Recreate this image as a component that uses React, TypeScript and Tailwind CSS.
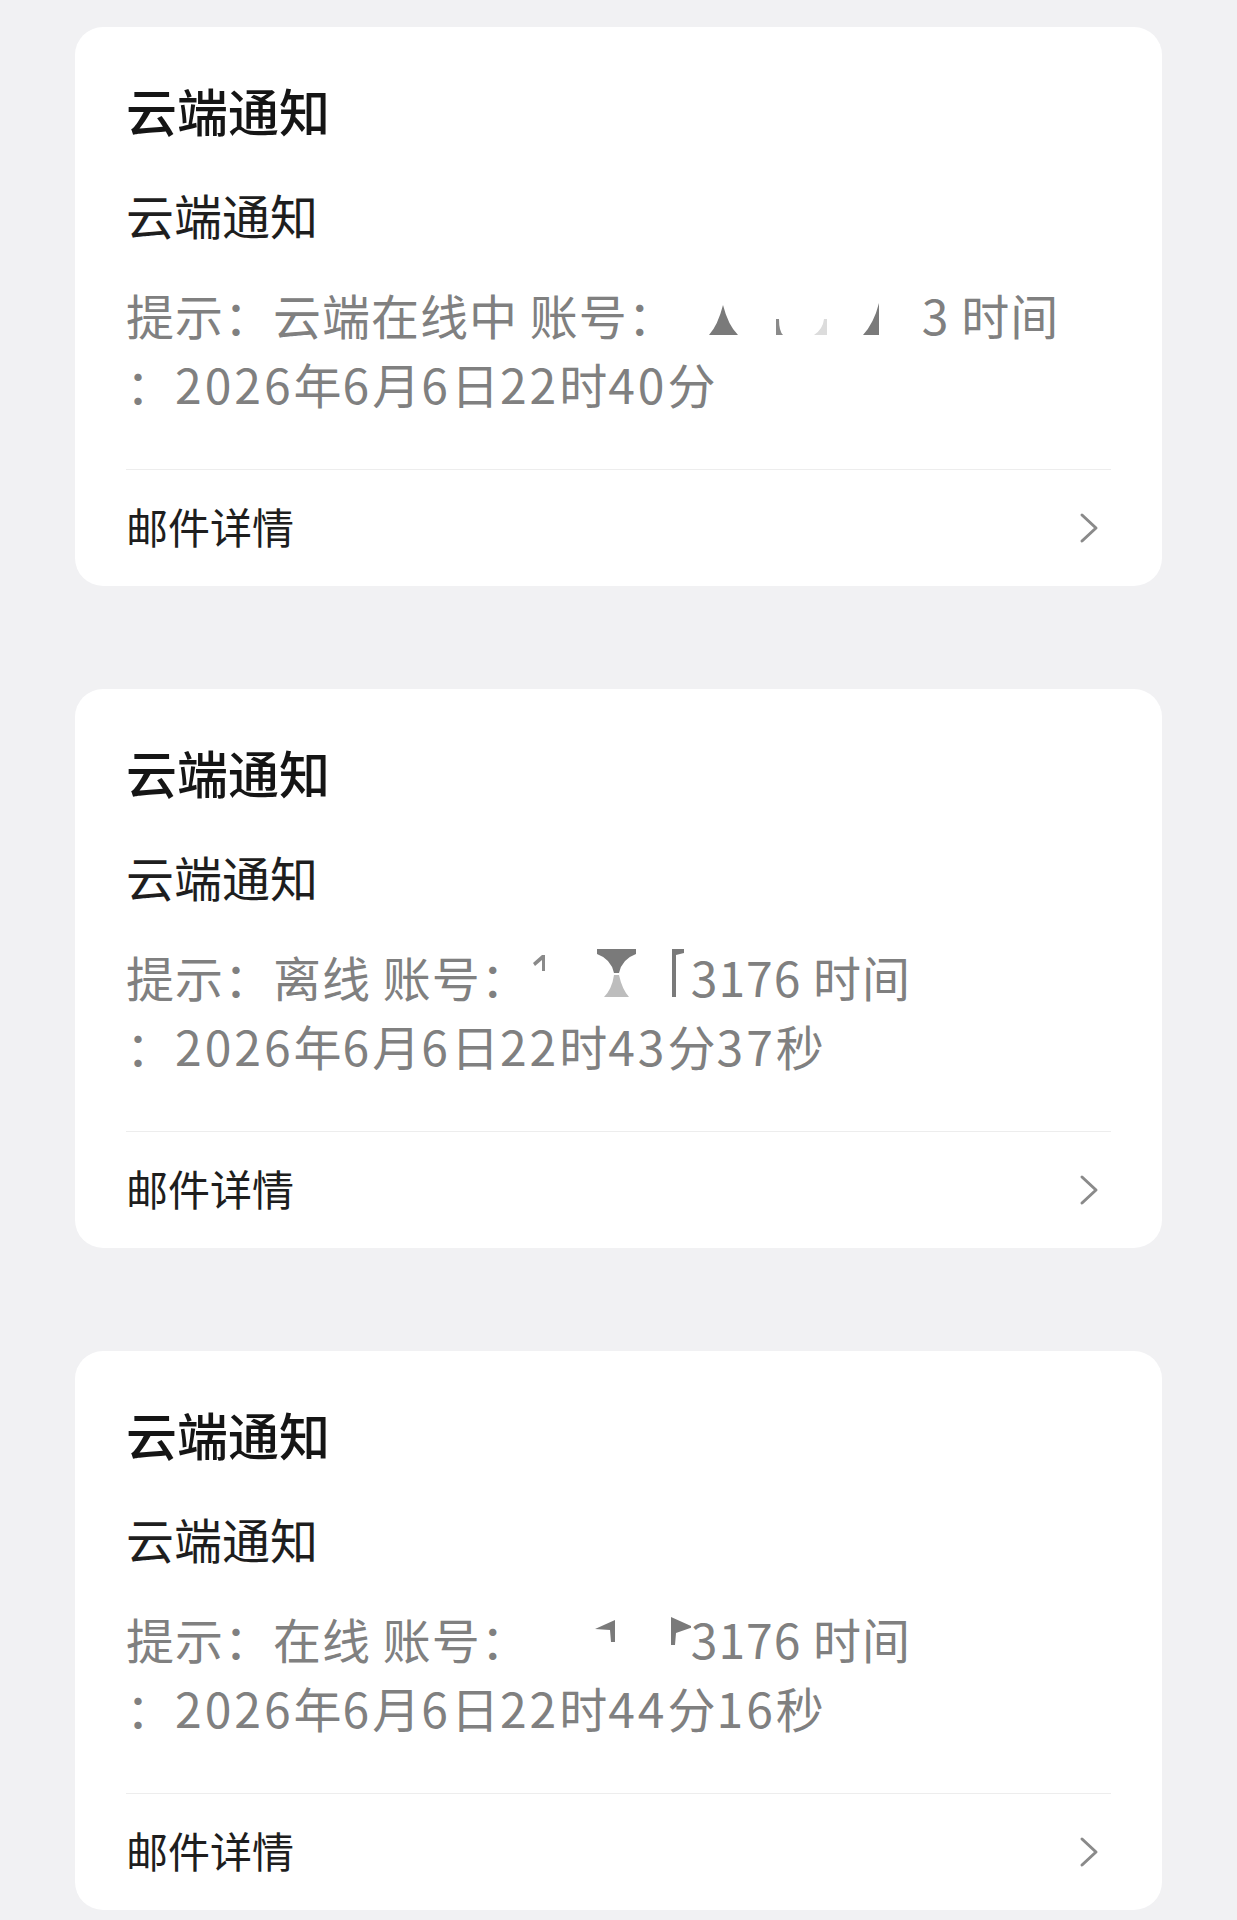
import type { ReactNode } from "react";

const FONT = { fontFamily: '"Noto Sans CJK SC", "Noto Sans", sans-serif' };

interface Notice {
  status: string;
  mask: ReactNode;
  tail: string;
  time: string;
}

// digits in the reference font run a little wider than Noto's
function Wide({ text }: { text: string }) {
  const parts = text.split(/(\d+)/);
  return (
    <>
      {parts.map((p, i) =>
        /^\d+$/.test(p) ? (
          <span key={i} className="tracking-[3px]">
            {p}
          </span>
        ) : (
          <span key={i}>{p}</span>
        ),
      )}
    </>
  );
}

// leftovers of the redaction box over the account number
function MaskOnline() {
  return (
    <svg width="245" height="40" viewBox="0 0 245 40" className="inline-block align-baseline">
      <path d="M32 40 Q41 30 46 10 Q51 30 61 40 Z" fill="#7a7a7a" />
      <path d="M99 24 L102 24 Q102 36 106 40 L99 40 Z" fill="#8a8a8a" />
      <path d="M147 24 L150 24 L150 40 L137 40 Q146 34 147 24 Z" fill="#dcdcdc" />
      <path d="M202 8 L202 40 L186 40 Q197 28 202 8 Z" fill="#7a7a7a" />
    </svg>
  );
}

function MaskOffline() {
  return (
    <svg width="161" height="48" viewBox="0 0 161 48" className="inline-block align-baseline">
      <path d="M3 14 L12 6 L15 6 L15 22 L12 22 L12 11 L5 17 Z" fill="#8a8a8a" />
      <path d="M67 0 L106 0 L106 5 Q92 10 89 24 L84 24 Q81 10 67 5 Z" fill="#7a7a7a" />
      <path d="M84 26 L89 26 Q92 40 99 48 L74 48 Q82 40 84 26 Z" fill="#bdbdbd" />
      <path d="M142 0 L154 0 L154 4 L146 6 L146 48 L142 48 Z" fill="#7a7a7a" />
    </svg>
  );
}

function MaskOnline2() {
  return (
    <svg width="161" height="48" viewBox="0 0 161 48" className="inline-block align-baseline">
      <path d="M65 18 L85 9 L85 31 L81 31 L80 19 Z" fill="#7a7a7a" />
      <path d="M141 6 L163 16 L146 22 L145 34 L141 34 Z" fill="#7a7a7a" />
    </svg>
  );
}

const notices: Notice[] = [
  { status: "云端在线中", mask: <MaskOnline />, tail: "3", time: "2026年6月6日22时40分" },
  { status: "离线", mask: <MaskOffline />, tail: "3176", time: "2026年6月6日22时43分37秒" },
  { status: "在线", mask: <MaskOnline2 />, tail: "3176", time: "2026年6月6日22时44分16秒" },
];

function ChevronRight() {
  return (
    <svg width="20" height="32" viewBox="0 0 20 32" fill="none">
      <polyline points="3,3 17,16 3,29" stroke="#8a8a8a" strokeWidth="3" strokeLinecap="round" strokeLinejoin="round" />
    </svg>
  );
}

function NoticeCard({ notice }: { notice: Notice }) {
  return (
    <section className="rounded-[28px] bg-white px-[51px] pt-[50px]">
      <h2 className="text-[51px] font-medium leading-[66px] text-[#151515]">云端通知</h2>
      <p className="mt-[41px] text-[48px] leading-[60px] text-[#1e1e1e]">云端通知</p>
      <div className="mt-[36px] text-[48px] leading-[69px] tracking-[1px] text-[#808080]">
        <div className="whitespace-nowrap">
          提示：{notice.status} 账号：{notice.mask}
          {notice.tail} 时间
        </div>
        <div className="whitespace-nowrap">
          ：<Wide text={notice.time} />
        </div>
      </div>
      <div className="mt-[51px] border-t border-[#ededed]" />
      <div className="flex h-[116px] items-center justify-between pr-[12px]">
        <span className="pb-[5px] text-[42px] text-[#1e1e1e]">邮件详情</span>
        <ChevronRight />
      </div>
    </section>
  );
}

export default function App() {
  return (
    <div className="flex min-h-[1920px] flex-col gap-[103px] bg-[#f1f1f3] px-[75px] pt-[27px]" style={FONT}>
      {notices.map((n, i) => (
        <NoticeCard key={i} notice={n} />
      ))}
    </div>
  );
}
